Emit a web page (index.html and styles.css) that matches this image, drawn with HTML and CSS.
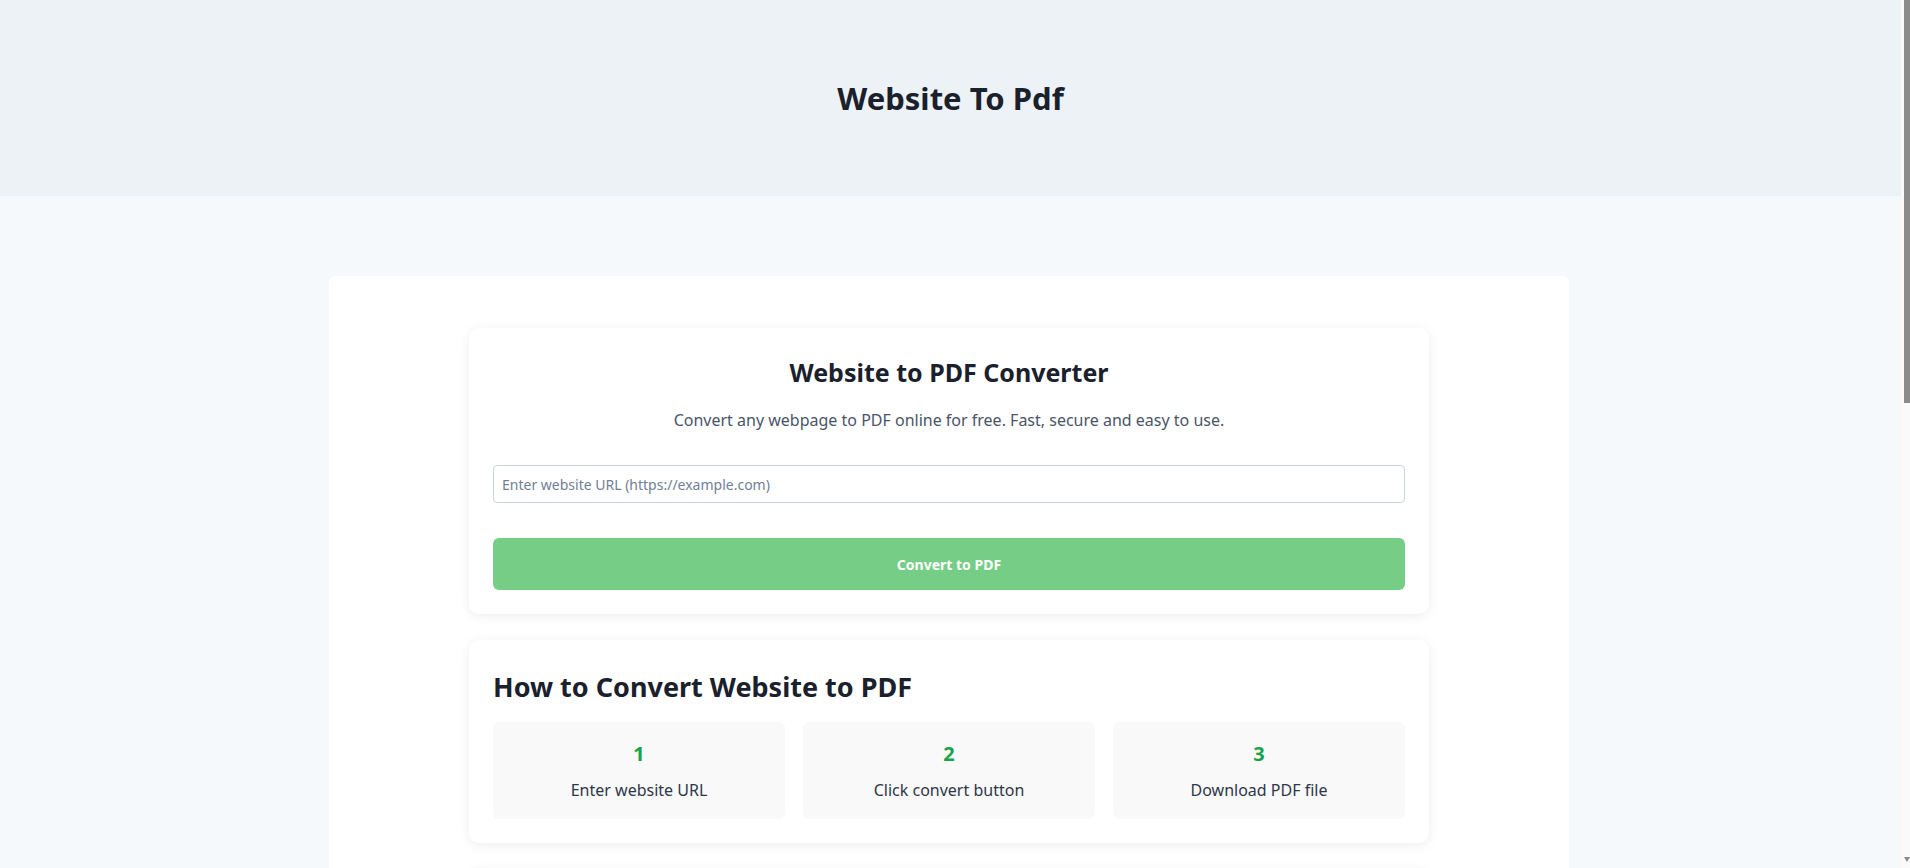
FILE: index.html
```html
<!DOCTYPE html>
<html lang="en">
<head>
    <meta charset="UTF-8">
    <meta name="viewport" content="width=device-width, initial-scale=1.0">
    <title>Website To Pdf</title>
    <link rel="stylesheet" href="styles.css">
</head>
<body>
    <header class="site-header">
        <h1>Website To Pdf</h1>
    </header>

    <main class="page">
        <div class="container">
            <section class="card converter">
                <h2>Website to PDF Converter</h2>
                <p class="lead">Convert any webpage to PDF online for free. Fast, secure and easy to use.</p>
                <form id="convertForm">
                    <input type="url" id="url" name="url" placeholder="Enter website URL (https://example.com)">
                    <button type="submit" id="convertBtn" disabled>Convert to PDF</button>
                </form>
            </section>

            <section class="card how-to">
                <h2>How to Convert Website to PDF</h2>
                <div class="steps">
                    <div class="step">
                        <div class="step-num">1</div>
                        <div class="step-text">Enter website URL</div>
                    </div>
                    <div class="step">
                        <div class="step-num">2</div>
                        <div class="step-text">Click convert button</div>
                    </div>
                    <div class="step">
                        <div class="step-num">3</div>
                        <div class="step-text">Download PDF file</div>
                    </div>
                </div>
            </section>

            <section class="card features">
                <h2>Features</h2>
                <p class="lead">Free, fast and secure conversion with no registration required.</p>
            </section>
        </div>
    </main>

    <!-- window scrollbar -->
    <div class="scrollbar">
        <div class="scroll-thumb"></div>
        <div class="scroll-arrow"></div>
    </div>
</body>
</html>
```

FILE: styles.css
```css
body {
    font-family: "Noto Sans", "Open Sans", sans-serif;
    margin: 0;
    padding-right: 9px;
    background-color: #f5f9fc;
    color: #1a202c;
}
.site-header {
    background-color: #edf2f7;
    height: 196px;
    display: flex;
    align-items: center;
    justify-content: center;
}
.site-header h1 {
    margin: 0;
    font-size: 31px;
    font-weight: 700;
    color: #1a202c;
}
.page {
    padding-top: 80px;
    padding-right: 3px;
}
.container {
    max-width: 1240px;
    margin: 0 auto;
    background: white;
    border-radius: 6px;
    padding: 52px 24px;
    box-sizing: border-box;
}
.card {
    max-width: 960px;
    margin: 0 auto 26px;
    background: white;
    border-radius: 10px;
    padding: 24px;
    box-sizing: border-box;
    box-shadow: 0 2px 12px rgba(0,0,0,0.07);
}
.converter {
    text-align: center;
}
.converter h2 {
    margin: 4px 0 0;
    font-size: 25px;
    line-height: 33px;
    font-weight: 700;
}
.lead {
    margin: 19px 0 0;
    font-size: 16px;
    line-height: 24px;
    color: #4a5568;
}
form {
    display: flex;
    flex-direction: column;
}
input {
    margin-top: 33px;
    height: 38px;
    padding: 0 8px;
    border: 1px solid #cbd5e0;
    border-radius: 4px;
    font-family: inherit;
    font-size: 14px;
    box-sizing: border-box;
}
input::placeholder {
    color: #718096;
}
button {
    margin-top: 35px;
    height: 52px;
    background-color: #76cd86;
    color: white;
    border: none;
    border-radius: 6px;
    font-family: inherit;
    font-size: 14px;
    font-weight: 700;
    cursor: pointer;
}
.how-to h2 {
    margin: 4px 0 0;
    font-size: 27px;
    line-height: 38px;
    font-weight: 700;
}
.steps {
    display: grid;
    grid-template-columns: repeat(3, 1fr);
    gap: 18px;
    margin-top: 16px;
}
.step {
    background-color: #f9f9f9;
    border-radius: 6px;
    height: 97px;
    display: flex;
    flex-direction: column;
    align-items: center;
    padding-top: 18px;
    box-sizing: border-box;
}
.step-num {
    font-size: 20px;
    line-height: 28px;
    font-weight: 700;
    color: #16a34a;
}
.step-text {
    margin-top: 10px;
    font-size: 16px;
    line-height: 24px;
    color: #2d3748;
}
.features h2 {
    margin: 4px 0 0;
    font-size: 27px;
}
.scrollbar {
    position: fixed;
    top: 0;
    right: 0;
    width: 9px;
    height: 100vh;
    background-color: #fafafa;
}
.scroll-thumb {
    margin-left: 3px;
    width: 6px;
    height: 403px;
    background-color: #8b8b8b;
}
.scroll-arrow {
    position: absolute;
    bottom: 6px;
    right: 0;
    width: 0;
    height: 0;
    border-left: 3px solid transparent;
    border-right: 3px solid transparent;
    border-top: 5px solid #8b8b8b;
}
```
